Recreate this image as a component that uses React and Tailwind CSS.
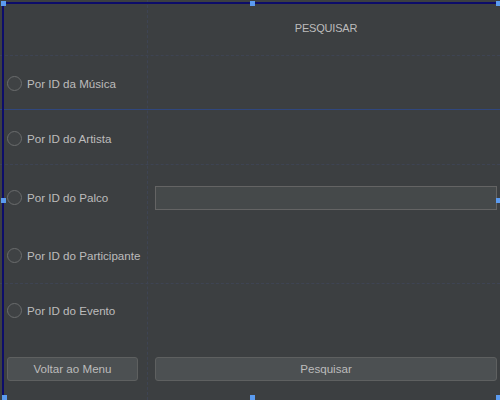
const OPTIONS = [
  { label: 'Por ID da Música', h: 'h-[56px]' },
  { label: 'Por ID do Artista', h: 'h-[54px]' },
  { label: 'Por ID do Palco', h: 'h-[64px]', field: true },
  { label: 'Por ID do Participante', h: 'h-[52px]' },
  { label: 'Por ID do Evento', h: 'h-[58px]' }
];

const Radio = ({ label }) => (
  <div className="flex items-center gap-[5px]">
    <span className="w-[15px] h-[15px] rounded-full border border-[#6a6c6d] bg-[#3f4244]" />
    <span>{label}</span>
  </div>
);

const Handle = ({ className }) => (
  <span className={`absolute w-[5px] h-[5px] bg-[#5b9bf0] ${className}`} />
);

export default function App() {
  return (
    <div className="relative w-[500px] h-[400px] overflow-hidden bg-[#3c3f41] text-[11.6px] text-[#bcbcbc] font-['Liberation_Sans',Arial,sans-serif]">
      {/* form content */}
      <div className="grid grid-cols-[148px_342px] pl-[7px]">
        <div className="h-[56px]" />
        <div className="h-[56px] flex items-center justify-center text-[11px] tracking-[-0.2px]">PESQUISAR</div>
        {OPTIONS.map((o) => (
          <div key={o.label} className="contents">
            <div className={`${o.h} flex items-center`}>
              <Radio label={o.label} />
            </div>
            <div className={`${o.h} flex items-center`}>
              {o.field && (
                <div className="w-full h-[24px] bg-[#45494a] border border-[#646464]" />
              )}
            </div>
          </div>
        ))}
        <div className="h-[17px]" />
        <div className="h-[17px]" />
        <div className="pr-[17px]">
          <button className="w-[131px] h-[24px] rounded-[3px] bg-[#4c5052] border border-[#5e6060] text-[#bcbcbc]">
            Voltar ao Menu
          </button>
        </div>
        <div>
          <button className="w-full h-[24px] rounded-[3px] bg-[#4c5052] border border-[#5e6060] text-[#bcbcbc]">
            Pesquisar
          </button>
        </div>
      </div>

      {/* designer guides */}
      <div className="absolute left-0 right-0 top-[55px] border-t border-dashed border-[#3e4453]" />
      <div className="absolute left-0 right-0 top-[109px] border-t border-[#30477e]" />
      <div className="absolute left-0 right-0 top-[164px] border-t border-dashed border-[#3e4453]" />
      <div className="absolute left-0 right-0 top-[283px] border-t border-dashed border-[#3e4453]" />
      <div className="absolute top-0 bottom-0 left-[147px] border-l border-dashed border-[#3e4453]" />

      {/* selection frame */}
      <div className="absolute top-[2px] bottom-0 left-[2px] w-[1.5px] bg-[#0c0c6a]" />
      <div className="absolute left-[2px] right-0 top-[2px] h-[1.5px] bg-[#0c0c6a]" />
      <Handle className="left-[1px] top-[1px]" />
      <Handle className="left-[250px] top-[1px]" />
      <Handle className="left-[496px] top-[1px]" />
      <Handle className="left-[1px] top-[198px]" />
      <Handle className="left-[496px] top-[198px]" />
      <Handle className="left-[2px] top-[395px]" />
      <Handle className="left-[250px] top-[395px]" />
      <Handle className="left-[496px] top-[395px]" />
    </div>
  );
}
